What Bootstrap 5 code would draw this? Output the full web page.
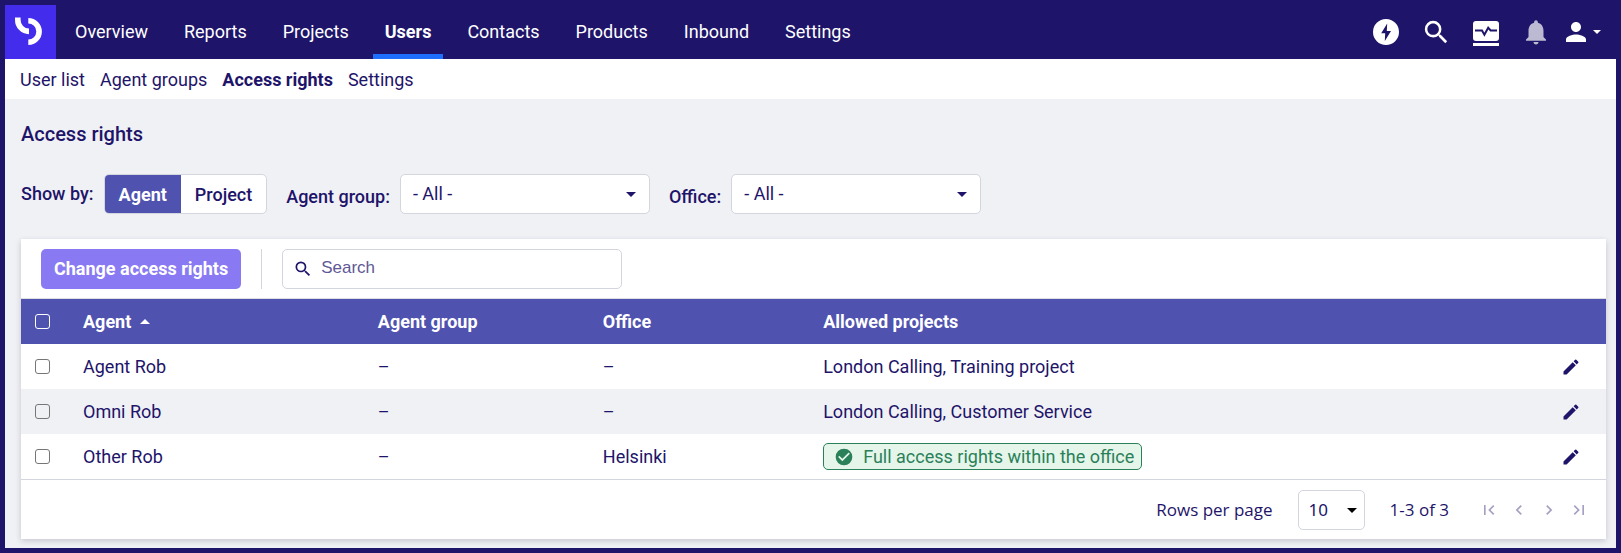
<!DOCTYPE html>
<html lang="en">
<head>
<meta charset="utf-8">
<meta name="viewport" content="width=device-width, initial-scale=1">
<title>Access rights</title>
<link href="https://cdn.jsdelivr.net/npm/bootstrap@5.3.0/dist/css/bootstrap.min.css" rel="stylesheet">
<style>
  :root { --navy: #1e1469; --indigo: #4f52af; --line: #d3d6df; --pale: #f0f1f5; }
  body { font-family: Roboto, "Liberation Sans", sans-serif; font-size: 18px; line-height: 24px; color: var(--navy); background: var(--pale); border: 5px solid var(--navy); min-height: 100vh; }
  svg { display: block; fill: currentColor; }
  .topbar { background: var(--navy); min-height: 54px; padding: 0 15px 0 0; }
  .brand-mark { background: #432ceb; width: 51px; height: 54px; margin-right: 7px; }
  .main-links { gap: 12px; }
  .main-links .nav-link { color: #fff; padding: 15px 12px 10px; border-bottom: 5px solid transparent; }
  .main-links .nav-link.active { font-weight: 700; border-bottom-color: #1f6fff; }
  .tools { gap: 20px; }
  .tools button { color: #fff; }
  .plain { display: block; background: none; border: 0; padding: 0; color: inherit; }
  .bell { opacity: .7; }
  .user-menu { gap: 2px; margin-left: -10px; }
  .subnav { background: #fff; min-height: 40px; padding: 9px 15px 7px; gap: 15px; }
  .subnav a { color: var(--navy); text-decoration: none; }
  main { padding: 20px 10px 9px 16px; }
  h1 { font-size: 20px; line-height: 30px; font-weight: 500; margin-bottom: 25px; }
  .filters { gap: 19px; margin-bottom: 25px; }
  .field { gap: 10px; }
  .filters label, .filter-name { font-weight: 500; }
  .filters .low { padding-top: 6px; }
  .view-switch { border: 1px solid var(--line); border-radius: 5px; overflow: hidden; background: #fff; }
  .view-switch .btn { font-size: 18px; line-height: 24px; font-weight: 500; color: var(--navy); border: 0; border-radius: 0; padding: 8px 14px 6px; }
  .view-switch .btn-check:checked + .btn { background: var(--indigo); color: #fff; font-weight: 700; }
  .form-select { --bs-form-select-bg-img: none; background: #fff url("data:image/svg+xml,%3Csvg xmlns='http://www.w3.org/2000/svg' viewBox='0 0 10 5'%3E%3Cpath fill='%231e1469' d='M0 0h10L5 5z'/%3E%3C/svg%3E") no-repeat right 13px center / 10px 5px; color: var(--navy); border: 1px solid var(--line); border-radius: 5px; font-size: 18px; line-height: 24px; height: 40px; padding: 7px 30px 7px 12px; }
  .filters .form-select { width: 250px; }
  .panel { background: #fff; box-shadow: 0 2px 6px rgba(30, 30, 60, .2); }
  .panel-tools { padding: 10px 20px 9px; gap: 20px; border-bottom: 1px solid #dcdee2; }
  .btn-change { background: #8979f2; color: #fff; font-size: 18px; line-height: 24px; font-weight: 700; border: 0; border-radius: 5px; padding: 8px 13px; }
  .btn-change:hover { background: #7566e0; color: #fff; }
  .rule { width: 1px; background: var(--line); }
  .search-box { width: 340px; height: 40px; border: 1px solid var(--line); border-radius: 5px; padding: 0 10px; gap: 8px; }
  .search-box input { font-family: "Liberation Sans", sans-serif; font-size: 17px; line-height: 24px; border: 0; padding: 5px 0 7px; outline: 0; color: var(--navy); min-width: 0; background: none; }
  .search-box input::placeholder { color: #5f5896; opacity: 1; }
  .rights { table-layout: fixed; width: 100%; }
  .rights th, .rights td { padding: 0 14px; height: 45px; vertical-align: middle; font-size: 18px; line-height: 24px; }
  .rights thead { background: var(--indigo); color: #fff; }
  .rights tbody tr:nth-child(even) { background: var(--pale); }
  .c-check { width: 48px; } .c-agent { width: 18.6%; } .c-group { width: 14.2%; } .c-office { width: 13.9%; } .c-edit { width: 59px; }
  .tick { appearance: none; display: block; width: 15px; height: 15px; margin: 0; border: 1px solid #767676; border-radius: 3px; background: transparent; }
  .tick:checked { background: #8979f2; }
  thead .tick { border-color: #fff; }
  .full { color: #2a8159; background: #e5f5ea; border: 1px solid #2a8159; border-radius: 5px; padding: 1px 7px 1px 10px; line-height: 24px; gap: 9px; height: 27px; }
  .pager { border-top: 1px solid var(--line); padding: 10px 17px 9px; font-family: "Open Sans", sans-serif; font-size: 17px; font-weight: 500; gap: 25px; }
  .pager .form-select { width: 67px; padding: 7px 20px 7px 10px; font-family: "Noto Sans", sans-serif; font-size: 17px; background-position: right 7px center; background-image: url("data:image/svg+xml,%3Csvg xmlns='http://www.w3.org/2000/svg' viewBox='0 0 10 5'%3E%3Cpath d='M0 0h10L5 5z'/%3E%3C/svg%3E"); }
  .pages { gap: 10px; margin-left: 5px; color: #a5a1c3; }
</style>
</head>
<body class="d-flex flex-column">
<header>
  <nav class="topbar d-flex align-items-center" aria-label="Main">
    <a class="brand-mark" href="#" aria-label="Home">
      <svg width="51" height="54" viewBox="0 0 51 54" style="fill:none"><g stroke="#fff" stroke-width="5.6"><path d="M12.8 12.5v2.2A11.3 11.5 0 0 0 24 26.4"/><path d="M23.3 15.700a10.800 10.800 0 0 1 0 21.600"/></g></svg>
    </a>
    <div class="nav main-links">
      <a class="nav-link" href="#">Overview</a>
      <a class="nav-link" href="#">Reports</a>
      <a class="nav-link" href="#">Projects</a>
      <a class="nav-link active" href="#" aria-current="page">Users</a>
      <a class="nav-link" href="#">Contacts</a>
      <a class="nav-link" href="#">Products</a>
      <a class="nav-link" href="#">Inbound</a>
      <a class="nav-link" href="#">Settings</a>
    </div>
    <div class="tools d-flex align-items-center ms-auto">
      <button class="plain" type="button" aria-label="Quick actions"><svg width="30" height="30" viewBox="0 0 30 30"><path fill-rule="evenodd" d="M15 2a13 13 0 1 0 0 26a13 13 0 1 0 0-26zM16.2 6.500L10.200 16.300H14.200L13.800 24L20 14H15.800z"/></svg></button>
      <button class="plain" type="button" aria-label="Search"><svg width="30" height="30" viewBox="0 0 23.500 23.500"><path d="M15.500 14h-.79l-.28-.27A6.470 6.470 0 0 0 16 9.500 6.500 6.500 0 1 0 9.500 16c1.610 0 3.090-.59 4.230-1.570l.27.28v.79l5 4.990L20.490 19l-4.990-5zm-6 0C7.010 14 5 11.990 5 9.500S7.010 5 9.500 5 14 7.010 14 9.500 11.990 14 9.500 14z"/></svg></button>
      <button class="plain" type="button" aria-label="Monitoring"><svg width="30" height="30" viewBox="0 0 30 30"><rect x="2" y="4" width="26" height="20" rx="3"/><rect x="2" y="26" width="26" height="3"/><path d="M4 13.500h7l2.400 4.200 3.800-7 2.400 2.800h6.400" fill="none" stroke="#1e1469" stroke-width="2"/></svg></button>
      <button class="plain bell" type="button" aria-label="Notifications"><svg width="30" height="30" viewBox="0 0 24 24"><path d="M12 22c1.100 0 2-.9 2-2h-4c0 1.100.89 2 2 2zm6-6v-5c0-3.070-1.640-5.640-4.500-6.320V4c0-.83-.67-1.500-1.500-1.500s-1.500.67-1.500 1.500v.68C7.630 5.360 6 7.920 6 11v5l-2 2v1h16v-1l-2-2z"/></svg></button>
      <button class="plain user-menu d-flex align-items-center" type="button" aria-label="Account"><svg width="30" height="30" viewBox="0 0 24 24"><path d="M12 12c2.210 0 4-1.790 4-4s-1.790-4-4-4-4 1.790-4 4 1.790 4 4 4zm0 2c-2.670 0-8 1.340-8 4v2h16v-2c0-2.660-5.330-4-8-4z"/></svg><svg width="8" height="4" viewBox="0 0 8 4"><path d="M0 0h8L4 4z"/></svg></button>
    </div>
  </nav>
  <nav class="subnav d-flex flex-wrap" aria-label="Users">
    <a href="#">User list</a>
    <a href="#">Agent groups</a>
    <a class="fw-bold" href="#" aria-current="page">Access rights</a>
    <a href="#">Settings</a>
  </nav>
</header>
<main class="flex-grow-1">
  <h1>Access rights</h1>
  <form class="filters d-flex flex-wrap align-items-center">
    <div class="field d-flex align-items-center" role="group" aria-labelledby="showby">
      <span class="filter-name" id="showby">Show by:</span>
      <div class="view-switch d-flex">
        <input class="btn-check" type="radio" name="view" id="by-agent" checked><label class="btn" for="by-agent">Agent</label>
        <input class="btn-check" type="radio" name="view" id="by-project"><label class="btn" for="by-project">Project</label>
      </div>
    </div>
    <div class="field d-flex align-items-center">
      <label class="low" for="group">Agent group:</label>
      <select class="form-select" id="group"><option>- All -</option></select>
    </div>
    <div class="field d-flex align-items-center">
      <label class="low" for="office">Office:</label>
      <select class="form-select" id="office"><option>- All -</option></select>
    </div>
  </form>
  <section class="panel">
    <div class="panel-tools d-flex flex-wrap">
      <button class="btn btn-change" type="button">Change access rights</button>
      <div class="rule"></div>
      <label class="search-box d-flex align-items-center">
        <svg width="20" height="20" viewBox="0 0 24 24"><path d="M15.500 14h-.79l-.28-.27A6.470 6.470 0 0 0 16 9.500 6.500 6.500 0 1 0 9.500 16c1.610 0 3.090-.59 4.230-1.570l.27.28v.79l5 4.990L20.490 19l-4.990-5zm-6 0C7.010 14 5 11.990 5 9.500S7.010 5 9.500 5 14 7.010 14 9.500 11.990 14 9.500 14z"/></svg>
        <input class="flex-grow-1" type="search" placeholder="Search" aria-label="Search">
      </label>
    </div>
    <table class="rights">
      <colgroup><col class="c-check"><col class="c-agent"><col class="c-group"><col class="c-office"><col><col class="c-edit"></colgroup>
      <thead>
        <tr>
          <th><input class="tick" type="checkbox" aria-label="Select all"></th>
          <th aria-sort="ascending"><button class="plain fw-bold d-flex align-items-center gap-2" type="button">Agent <svg width="12" height="5" viewBox="0 0 12 5"><path d="M1 5h10L6 0z"/></svg></button></th>
          <th>Agent group</th><th>Office</th><th>Allowed projects</th><th></th>
        </tr>
      </thead>
      <tbody>
        <tr>
          <td><input class="tick" type="checkbox" aria-label="Select Agent Rob"></td>
          <td>Agent Rob</td><td>–</td><td>–</td><td>London Calling, Training project</td>
          <td><button class="plain" type="button" aria-label="Edit Agent Rob"><svg width="20" height="20" viewBox="0 0 24 24"><path d="M3 17.250V21h3.750L17.810 9.940l-3.750-3.750L3 17.250zM20.710 7.040a1 1 0 0 0 0-1.410l-2.340-2.340a1 1 0 0 0-1.410 0l-1.830 1.830 3.750 3.750 1.830-1.830z"/></svg></button></td>
        </tr>
        <tr>
          <td><input class="tick" type="checkbox" aria-label="Select Omni Rob"></td>
          <td>Omni Rob</td><td>–</td><td>–</td><td>London Calling, Customer Service</td>
          <td><button class="plain" type="button" aria-label="Edit Omni Rob"><svg width="20" height="20" viewBox="0 0 24 24"><path d="M3 17.250V21h3.750L17.810 9.940l-3.750-3.750L3 17.250zM20.710 7.040a1 1 0 0 0 0-1.410l-2.340-2.340a1 1 0 0 0-1.410 0l-1.830 1.830 3.750 3.750 1.830-1.830z"/></svg></button></td>
        </tr>
        <tr>
          <td><input class="tick" type="checkbox" aria-label="Select Other Rob"></td>
          <td>Other Rob</td><td>–</td><td>Helsinki</td>
          <td><div class="d-flex"><span class="full d-inline-flex align-items-center"><svg width="20" height="20" viewBox="0 0 24 24"><path d="M12 2a10 10 0 1 0 0 20 10 10 0 0 0 0-20zm-2 15l-5-5 1.410-1.410L10 14.170l7.590-7.590L19 8l-9 9z"/></svg>Full access rights within the office</span></div></td>
          <td><button class="plain" type="button" aria-label="Edit Other Rob"><svg width="20" height="20" viewBox="0 0 24 24"><path d="M3 17.250V21h3.750L17.810 9.940l-3.750-3.750L3 17.250zM20.710 7.040a1 1 0 0 0 0-1.410l-2.340-2.340a1 1 0 0 0-1.410 0l-1.830 1.830 3.750 3.750 1.830-1.830z"/></svg></button></td>
        </tr>
      </tbody>
    </table>
    <div class="pager d-flex flex-wrap align-items-center justify-content-end">
      <label for="rows">Rows per page</label>
      <select class="form-select" id="rows"><option>10</option></select>
      <span>1-3 of 3</span>
      <div class="pages d-flex">
        <button class="plain" type="button" aria-label="First page"><svg width="20" height="20" viewBox="0 0 24 24"><path d="M18.410 16.590L13.820 12l4.590-4.590L17 6l-6 6 6 6zM6 6h2v12H6z"/></svg></button>
        <button class="plain" type="button" aria-label="Previous page"><svg width="20" height="20" viewBox="0 0 24 24"><path d="M15.410 7.410L14 6l-6 6 6 6 1.410-1.410L10.830 12z"/></svg></button>
        <button class="plain" type="button" aria-label="Next page"><svg width="20" height="20" viewBox="0 0 24 24"><path d="M10 6L8.590 7.410 13.170 12l-4.580 4.590L10 18l6-6z"/></svg></button>
        <button class="plain" type="button" aria-label="Last page"><svg width="20" height="20" viewBox="0 0 24 24"><path d="M5.590 7.410L10.180 12l-4.590 4.590L7 18l6-6-6-6zM16 6h2v12h-2z"/></svg></button>
      </div>
    </div>
  </section>
</main>
<script src="https://cdn.jsdelivr.net/npm/bootstrap@5.3.0/dist/js/bootstrap.bundle.min.js"></script>
</body>
</html>
